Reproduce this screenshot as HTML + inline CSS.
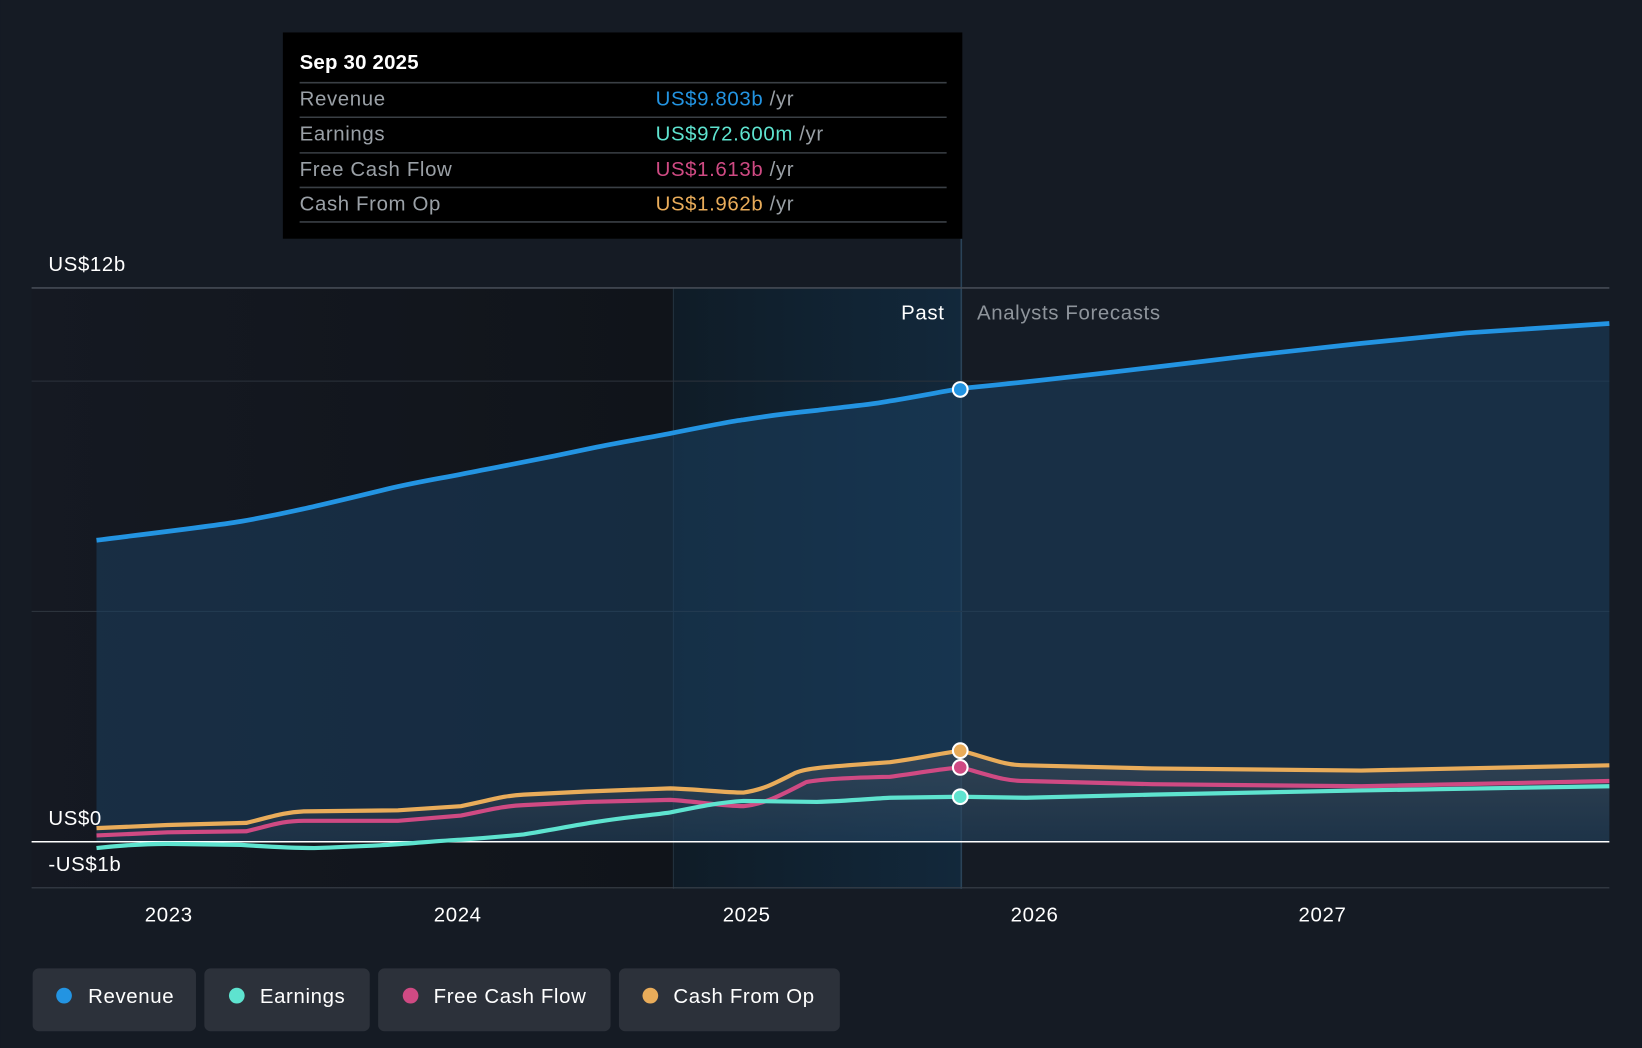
<!DOCTYPE html>
<html><head><meta charset="utf-8"><style>
html,body{margin:0;padding:0;background:#151b24;width:1642px;height:1048px;overflow:hidden}
svg{display:block}
text{font-family:"Liberation Sans",sans-serif;letter-spacing:0.6px}
</style></head><body>
<svg width="1642" height="1048" viewBox="0 0 1568 1001" xmlns="http://www.w3.org/2000/svg">
<defs>
<linearGradient id="past" x1="0" x2="1" y1="0" y2="0">
<stop offset="0" stop-color="#151922"/><stop offset="1" stop-color="#10141a"/></linearGradient>
<linearGradient id="hl" x1="0" x2="1"><stop offset="0" stop-color="#0f1c27"/><stop offset="1" stop-color="#12283b"/></linearGradient>
<linearGradient id="low" x1="0" y1="0" x2="0" y2="1"><stop offset="0" stop-color="#4a5560" stop-opacity="0.5"/><stop offset="1" stop-color="#4a5560" stop-opacity="0.1"/></linearGradient>
</defs>
<rect width="1568" height="1001" fill="#151b24"/>
<rect x="30" y="275" width="613" height="574" fill="url(#past)"/>
<rect x="643" y="275" width="275" height="574" fill="url(#hl)"/>
<line x1="643" y1="275" x2="643" y2="849" stroke="#24323f" stroke-width="1"/>
<line x1="918" y1="228" x2="918" y2="849" stroke="#2a4358" stroke-width="1.5"/>
<line x1="30" y1="275" x2="1537" y2="275" stroke="#444b54" stroke-width="1.5"/>
<line x1="30" y1="364" x2="1537" y2="364" stroke="#2c333c" stroke-width="1"/>
<line x1="30" y1="584" x2="1537" y2="584" stroke="#2c333c" stroke-width="1"/>
<line x1="30" y1="848" x2="1537" y2="848" stroke="#3a414a" stroke-width="1"/>
<path d="M92,516 C140,510 200,503 230,498 C270,491 300,484 370,467 C400,460 420,457 440,453 C480,445 500,442 570,427 C600,421 620,418 640,414 C680,406 700,402 710,401 C740,396 760,394 780,392 C810,388 830,387 850,383 C880,378 900,374 918,371 C960,367 1000,363 1100,351 L1200,339 L1300,328 L1400,318 L1537,309 L1537,804 L92,804Z" fill="#1b4060" fill-opacity="0.55"/>
<path d="M92,791 L160,788 L235,786 C260,780 270,776 290,775 L380,774 L440,770 C470,764 480,760 500,759 L560,756 L640,753 C670,754 690,757 710,757 C730,754 740,748 760,738 C770,734 780,733 850,728 C880,724 900,719 918,717 C950,726 960,731 980,731 L1100,734 L1300,736 L1537,731 L1537,804 L92,804Z" fill="url(#low)"/>
<line x1="30" y1="804" x2="1537" y2="804" stroke="#ffffff" stroke-width="1.5"/>
<path d="M92,516 C140,510 200,503 230,498 C270,491 300,484 370,467 C400,460 420,457 440,453 C480,445 500,442 570,427 C600,421 620,418 640,414 C680,406 700,402 710,401 C740,396 760,394 780,392 C810,388 830,387 850,383 C880,378 900,374 918,371 C960,367 1000,363 1100,351 L1200,339 L1300,328 L1400,318 L1537,309" fill="none" stroke="#2394e2" stroke-width="4.5"/>
<path d="M92,791 L160,788 L235,786 C260,780 270,776 290,775 L380,774 L440,770 C470,764 480,760 500,759 L560,756 L640,753 C670,754 690,757 710,757 C730,754 740,748 760,738 C770,734 780,733 850,728 C880,724 900,719 918,717 C950,726 960,731 980,731 L1100,734 L1300,736 L1537,731" fill="none" stroke="#e9ac5a" stroke-width="4"/>
<path d="M92,798 L160,795 L235,794 C260,788 270,784 290,784 L380,784 L440,779 C470,773 480,770 500,769 L560,766 L640,764 C670,766 690,770 710,770 C730,768 745,760 770,747 C780,745 800,743 850,742 C880,738 900,734 918,733 C950,742 960,746 980,746 L1100,749 L1300,751 L1537,746" fill="none" stroke="#cf4a83" stroke-width="4"/>
<path d="M92,810 C120,807 140,806 160,806 L230,807 C260,809 280,810 300,810 C330,809 350,808 370,807 C400,805 420,803 440,802 C470,800 480,799 500,797 C530,792 550,788 570,785 C600,780 620,779 640,776 C670,770 690,766 710,765 L780,766 C810,765 830,763 850,762 L918,761 L980,762 L1100,759 L1300,755 L1537,751" fill="none" stroke="#5ee3cf" stroke-width="4"/>
<circle cx="917" cy="372" r="7" fill="#2394e2" stroke="#fff" stroke-width="2"/>
<circle cx="917" cy="717" r="7" fill="#e9ac5a" stroke="#fff" stroke-width="2"/>
<circle cx="917" cy="733" r="7" fill="#cf4a83" stroke="#fff" stroke-width="2"/>
<circle cx="917" cy="761" r="7" fill="#5ee3cf" stroke="#fff" stroke-width="2"/>
<text x="46" y="259" fill="#fff" font-size="19.5">US$12b</text>
<text x="46" y="788" fill="#fff" font-size="19.5">US$0</text>
<text x="46" y="832" fill="#fff" font-size="19.5">-US$1b</text>
<text x="902" y="305" fill="#fff" font-size="19.5" text-anchor="end">Past</text>
<text x="933" y="305" fill="#8e949b" font-size="19.5">Analysts Forecasts</text>
<g fill="#fff" font-size="19.5" text-anchor="middle">
<text x="161" y="880">2023</text><text x="437" y="880">2024</text><text x="713" y="880">2025</text><text x="988" y="880">2026</text><text x="1263" y="880">2027</text></g>
<rect x="270" y="31" width="649" height="197" fill="#000"/>
<text x="286" y="66" fill="#fff" font-size="19.5" font-weight="bold" style="letter-spacing:0.2px">Sep 30 2025</text>
<g stroke="#3a3f45" stroke-width="1.5"><line x1="286" y1="79" x2="904" y2="79"/><line x1="286" y1="112" x2="904" y2="112"/><line x1="286" y1="146" x2="904" y2="146"/><line x1="286" y1="179" x2="904" y2="179"/><line x1="286" y1="212" x2="904" y2="212"/></g>
<g font-size="19.5" fill="#9aa0a6">
<text x="286" y="101">Revenue</text><text x="286" y="134">Earnings</text><text x="286" y="168">Free Cash Flow</text><text x="286" y="201">Cash From Op</text></g>
<g font-size="19.5">
<text x="626" y="101"><tspan fill="#2394e2">US$9.803b</tspan><tspan fill="#9aa0a6"> /yr</tspan></text>
<text x="626" y="134"><tspan fill="#5ee3cf">US$972.600m</tspan><tspan fill="#9aa0a6"> /yr</tspan></text>
<text x="626" y="168"><tspan fill="#cf4a83">US$1.613b</tspan><tspan fill="#9aa0a6"> /yr</tspan></text>
<text x="626" y="201"><tspan fill="#e9ac5a">US$1.962b</tspan><tspan fill="#9aa0a6"> /yr</tspan></text></g>
<g fill="#2c313a">
<rect x="31" y="925" width="156" height="60" rx="6"/><rect x="195" y="925" width="158" height="60" rx="6"/><rect x="361" y="925" width="222" height="60" rx="6"/><rect x="591" y="925" width="211" height="60" rx="6"/></g>
<circle cx="61" cy="951" r="7.5" fill="#2394e2"/><circle cx="226" cy="951" r="7.5" fill="#5ee3cf"/><circle cx="392" cy="951" r="7.5" fill="#cf4a83"/><circle cx="621" cy="951" r="7.5" fill="#e9ac5a"/>
<g fill="#fff" font-size="19.5" style="letter-spacing:0.9px">
<text x="84" y="958">Revenue</text><text x="248" y="958">Earnings</text><text x="414" y="958">Free Cash Flow</text><text x="643" y="958">Cash From Op</text></g>
</svg>
</body></html>
